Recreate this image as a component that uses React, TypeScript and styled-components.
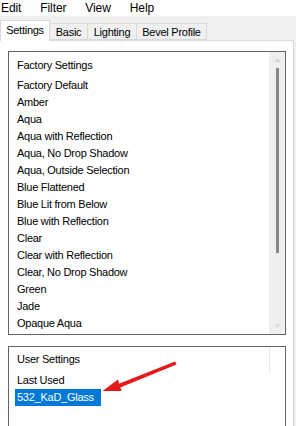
import React from "react";
import styled, { createGlobalStyle } from "styled-components";

const Global = createGlobalStyle`
  html, body { margin: 0; padding: 0; }
  body {
    background: #f0f0f0;
    font-family: "Liberation Sans", Arial, sans-serif;
    font-size: 11px;
    color: #000;
    width: 296px;
    height: 426px;
    overflow: hidden;
  }
`;

const Root = styled.div`
  position: relative;
  width: 296px;
  height: 426px;
  overflow: hidden;
  display: flex;
  flex-direction: column;
`;

const MenuBar = styled.div`
  height: 16px;
  flex-shrink: 0;
  background: #fff;
  display: flex;
  align-items: center;
`;

const MenuItem = styled.div<{ $first?: boolean }>`
  padding: 0 9px 0 ${(p) => (p.$first ? "1px" : "10px")};
  font-size: 12px;
  letter-spacing: -0.1px;
  line-height: 16px;
`;

const TabStrip = styled.div`
  height: 24px;
  flex-shrink: 0;
  display: flex;
  align-items: flex-end;
  position: relative;
  z-index: 1;
`;

const Tab = styled.div<{ $active?: boolean; $w: number }>`
  box-sizing: border-box;
  width: ${(p) => p.$w}px;
  height: ${(p) => (p.$active ? 21 : 17)}px;
  margin-bottom: ${(p) => (p.$active ? -1 : 0)}px;
  margin-left: ${(p) => (p.$active ? 0 : -1)}px;
  background: ${(p) => (p.$active ? "#fff" : "#f0f0f0")};
  border: 1px solid #d9d9d9;
  border-bottom: ${(p) => (p.$active ? "none" : "1px solid #d9d9d9")};
  display: flex;
  align-items: center;
  justify-content: center;
  padding-bottom: ${(p) => (p.$active ? 2 : 0)}px;
  font-size: 11px;
  letter-spacing: -0.25px;
  &:first-child { margin-left: 0; }
`;

const Panel = styled.div`
  box-sizing: border-box;
  width: 294px;
  flex: 1;
  min-height: 0;
  overflow: hidden;
  background: #fff;
  border-top: 1px solid #d9d9d9;
  border-right: 1px solid #d9d9d9;
  padding: 10px 0 0 8px;
  display: flex;
  flex-direction: column;
  gap: 11px;
`;

const ListBox = styled.div<{ $h: number }>`
  box-sizing: border-box;
  width: 278px;
  height: ${(p) => p.$h}px;
  flex-shrink: 0;
  border: 1px solid #646464;
  display: flex;
`;

const ListContent = styled.div<{ $pt: number }>`
  flex: 1;
  padding: ${(p) => p.$pt}px 0 0 6px;
  display: flex;
  flex-direction: column;
`;

const Header = styled.div<{ $mb: number }>`
  height: 17px;
  line-height: 17px;
  margin-bottom: ${(p) => p.$mb}px;
  padding-left: 2px;
  letter-spacing: -0.25px;
`;

const Item = styled.div<{ $selected?: boolean }>`
  height: 17px;
  line-height: 17px;
  align-self: flex-start;
  padding: 0 7px 0 2px;
  letter-spacing: -0.25px;
  background: ${(p) => (p.$selected ? "#0078d7" : "transparent")};
  color: ${(p) => (p.$selected ? "#fff" : "#000")};
`;

const ScrollBar = styled.div`
  width: 16px;
  background: #efefef;
  display: flex;
  flex-direction: column;
  align-items: center;
  padding-top: 6px;
  box-sizing: border-box;
`;

const Thumb = styled.div`
  width: 3px;
  height: 185px;
  margin-top: 6px;
  background: #868686;
`;

const Spacer = styled.div`
  flex: 1;
`;

const DownArrow = styled.svg`
  margin-bottom: 6px;
`;

const FadedScroll = styled.div`
  width: 16px;
  display: flex;
  justify-content: flex-start;
`;

const FadedLine = styled.div`
  width: 1px;
  height: 25px;
  background: #e6e6e6;
`;

const Overlay = styled.svg`
  position: absolute;
  left: 0;
  top: 0;
  pointer-events: none;
`;

const factory = [
  "Factory Default",
  "Amber",
  "Aqua",
  "Aqua with Reflection",
  "Aqua, No Drop Shadow",
  "Aqua, Outside Selection",
  "Blue Flattened",
  "Blue Lit from Below",
  "Blue with Reflection",
  "Clear",
  "Clear with Reflection",
  "Clear, No Drop Shadow",
  "Green",
  "Jade",
  "Opaque Aqua",
];

export default function App() {
  return (
    <Root>
      <Global />
      <MenuBar>
        <MenuItem $first>Edit</MenuItem>
        <MenuItem>Filter</MenuItem>
        <MenuItem>View</MenuItem>
        <MenuItem>Help</MenuItem>
      </MenuBar>
      <TabStrip>
        <Tab $active $w={50}>Settings</Tab>
        <Tab $w={39}>Basic</Tab>
        <Tab $w={50}>Lighting</Tab>
        <Tab $w={71}>Bevel Profile</Tab>
      </TabStrip>
      <Panel>
        <ListBox $h={284}>
          <ListContent $pt={5}>
            <Header $mb={3}>Factory Settings</Header>
            {factory.map((f) => (
              <Item key={f}>{f}</Item>
            ))}
          </ListContent>
          <ScrollBar>
            <svg width="7" height="4" viewBox="0 0 7 4">
              <path d="M0 4 L3.5 0 L7 4 Z" fill="#d6d6d6" />
            </svg>
            <Thumb />
            <Spacer />
            <DownArrow width="7" height="4" viewBox="0 0 7 4">
              <path d="M0 0 L3.5 4 L7 0 Z" fill="#dcdcdc" />
            </DownArrow>
          </ScrollBar>
        </ListBox>
        <ListBox $h={100}>
          <ListContent $pt={4}>
            <Header $mb={4}>User Settings</Header>
            <Item>Last Used</Item>
            <Item $selected>532_KaD_Glass</Item>
          </ListContent>
          <FadedScroll>
            <FadedLine />
          </FadedScroll>
        </ListBox>
      </Panel>
      <Overlay width="296" height="426" viewBox="0 0 296 426">
        <path d="M175 361.5 L176.5 364.5 L119 388 L117 384.5 Z" fill="#e31b1b" />
        <path d="M102.5 391 L118 379.5 L121.5 391 Z" fill="#e31b1b" />
      </Overlay>
    </Root>
  );
}
